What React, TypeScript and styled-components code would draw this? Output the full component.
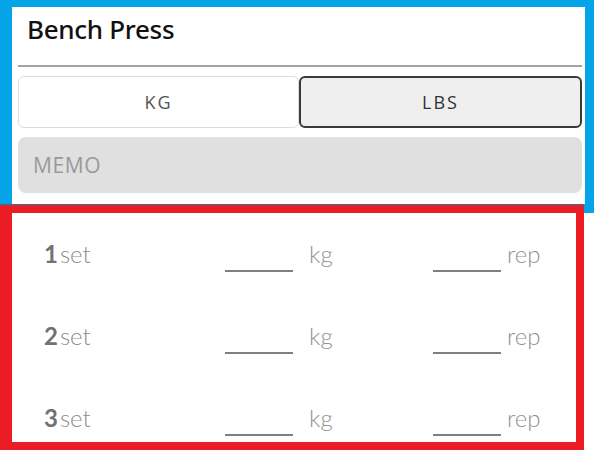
import React from "react";
import styled, { createGlobalStyle } from "styled-components";

const Global = createGlobalStyle`
  html, body { margin: 0; padding: 0; background: #ffffff; }
  body { font-family: "Noto Sans", "Open Sans", sans-serif; }
`;

const Page = styled.div`
  width: 600px;
  height: 450px;
  overflow: hidden;
  background: #fff;
`;

const BlueFrame = styled.section`
  box-sizing: border-box;
  width: 594px;
  height: 213px;
  border-style: solid;
  border-color: #05a3e8;
  border-width: 7px 9px 9px 12px;
  padding: 0 3px 0 6px;
  display: flex;
  flex-direction: column;
  background: #fff;
`;

const Title = styled.h1`
  margin: 0;
  height: 44px;
  padding-left: 9px;
  display: flex;
  align-items: center;
  font-family: "Noto Sans", sans-serif;
  font-weight: 500;
  font-size: 26px;
  color: #111;
  letter-spacing: -0.3px;
`;

const Divider = styled.hr`
  margin: 14px 0 0 0;
  border: none;
  height: 2px;
  background: #a3a3a3;
`;

const Toggle = styled.div`
  margin-top: 9px;
  display: grid;
  grid-template-columns: 281px 1fr;
  height: 52px;
`;

const UnitButton = styled.button<{ $active?: boolean }>`
  box-sizing: border-box;
  height: 52px;
  margin: 0;
  font-family: "Open Sans", sans-serif;
  font-weight: 400;
  font-size: 18px;
  letter-spacing: 2px;
  color: ${(p) => (p.$active ? "#333" : "#555")};
  background: ${(p) => (p.$active ? "#efefef" : "#ffffff")};
  border: ${(p) => (p.$active ? "2px solid #3a3a3a" : "1px solid #dcdcdc")};
  border-radius: 6px;
  padding: 0;
`;

const Memo = styled.div`
  margin-top: 9px;
  height: 56px;
  border-radius: 8px;
  background: #e0e0e0;
  display: flex;
  align-items: center;
  padding-left: 15px;
  font-family: "Open Sans", sans-serif;
  font-weight: 400;
  font-size: 21px;
  letter-spacing: 0.6px;
  color: #9a9a9a;
`;

const RedFrame = styled.section`
  box-sizing: border-box;
  width: 584px;
  height: 246px;
  margin-top: -9px;
  border-style: solid;
  border-color: #ec1c24;
  border-width: 9px 8px 8px 12px;
  padding: 20px 0 0 32px;
  display: flex;
  flex-direction: column;
  gap: 42px;
  background: #fff;
  position: relative;
`;

const SeamLine = styled.div`
  position: absolute;
  left: -12px;
  right: -8px;
  top: -9px;
  height: 2px;
  background: #4a6a8a;
  opacity: 0.6;
`;

const Row = styled.div`
  height: 40px;
  display: grid;
  grid-template-columns: 181px 68px 140px 68px 1fr;
  align-items: center;
  font-family: "Lato", sans-serif;
  font-size: 24px;
`;

const SetLabel = styled.div`
  color: #8c8c8c;
  font-weight: 300;
  b {
    font-weight: 700;
    color: #727272;
    margin-right: 2px;
  }
`;

const Blank = styled.div`
  align-self: end;
  height: 2px;
  margin-bottom: 1px;
  background: #808080;
`;

const Unit = styled.span<{ $pad: number }>`
  padding-left: ${(p) => p.$pad}px;
  color: #929292;
  font-weight: 300;
`;

export default function App() {
  return (
    <Page>
      <Global />
      <BlueFrame>
        <Title>Bench Press</Title>
        <Divider />
        <Toggle>
          <UnitButton>KG</UnitButton>
          <UnitButton $active>LBS</UnitButton>
        </Toggle>
        <Memo>MEMO</Memo>
      </BlueFrame>
      <RedFrame>
        <SeamLine />
        {[1, 2, 3].map((n) => (
          <Row key={n}>
            <SetLabel>
              <b>{n}</b>set
            </SetLabel>
            <Blank />
            <Unit $pad={16}>kg</Unit>
            <Blank />
            <Unit $pad={6}>rep</Unit>
          </Row>
        ))}
      </RedFrame>
    </Page>
  );
}
